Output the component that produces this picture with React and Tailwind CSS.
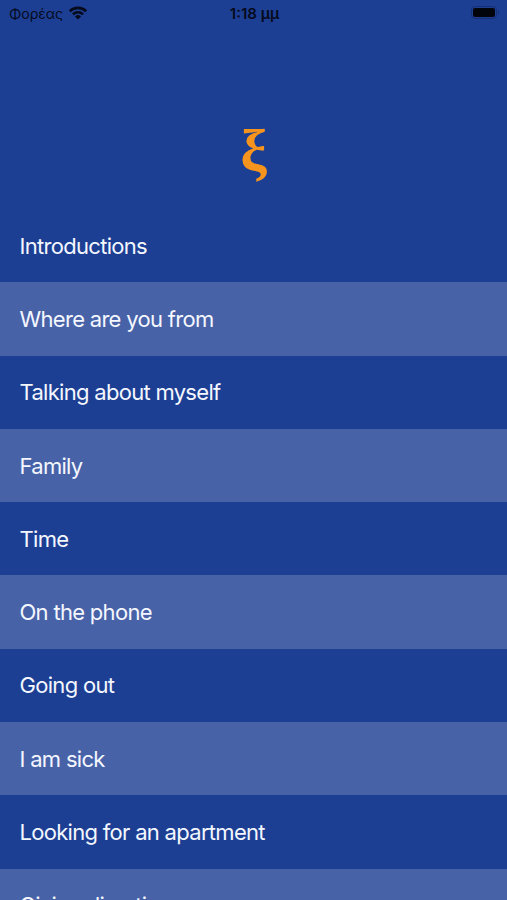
import clsx from "clsx";

const lessons = [
  "Introductions",
  "Where are you from",
  "Talking about myself",
  "Family",
  "Time",
  "On the phone",
  "Going out",
  "I am sick",
  "Looking for an apartment",
  "Giving directions",
];

function WifiIcon() {
  return (
    <svg width="20" height="14" viewBox="0 0 20 14" fill="none" stroke="#050a1c">
      <path d="M1.8 5.2a11.8 11.8 0 0 1 16.4 0" strokeWidth="2.6" />
      <path d="M4.9 8.4a7.4 7.4 0 0 1 10.2 0" strokeWidth="2.5" />
      <path d="M10 13.6 7 10.5a4.3 4.3 0 0 1 6 0Z" fill="#050a1c" stroke="none" />
    </svg>
  );
}

function BatteryIcon() {
  return (
    <svg width="29" height="14" viewBox="0 0 29 14">
      <rect x="0.5" y="0.5" width="25" height="12" rx="3.6" fill="none" stroke="#153074" />
      <rect x="2" y="2" width="22" height="9" rx="2" fill="#02040b" />
      <path d="M27 4.4c1.6.6 1.6 3.6 0 4.2Z" fill="#153074" />
    </svg>
  );
}

function StatusBar() {
  return (
    <header className="grid h-[26px] grid-cols-3 items-center pl-[9px] pr-[7px] text-[#050a1c]">
      <div className="flex items-center gap-[5px] text-[14px]">
        <span>Φορέας</span>
        <WifiIcon />
      </div>
      <span className="pt-0.5 text-center text-[15px] font-semibold">1:18 μμ</span>
      <div className="flex justify-end">
        <BatteryIcon />
      </div>
    </header>
  );
}

export default function App() {
  return (
    <div className="h-[900px] overflow-hidden bg-[#1c3f94] font-['Inter',sans-serif]">
      <StatusBar />

      {/* Logo */}
      <div className="flex h-[183px] items-center justify-center pt-[66px]">
        <span className="font-['Liberation_Serif',serif] text-[60px] font-bold leading-none text-[#f7941d]">
          ξ
        </span>
      </div>

      {/* Lesson list */}
      <ul>
        {lessons.map((lesson, i) => (
          <li
            key={lesson}
            className={clsx(
              "flex h-[73.3px] items-center pl-[19.5px] pt-px text-[22px] tracking-[-0.7px] text-[#f4f7ff]",
              i % 2 === 1 && "bg-[#4862a8]"
            )}
          >
            {lesson}
          </li>
        ))}
      </ul>
    </div>
  );
}
